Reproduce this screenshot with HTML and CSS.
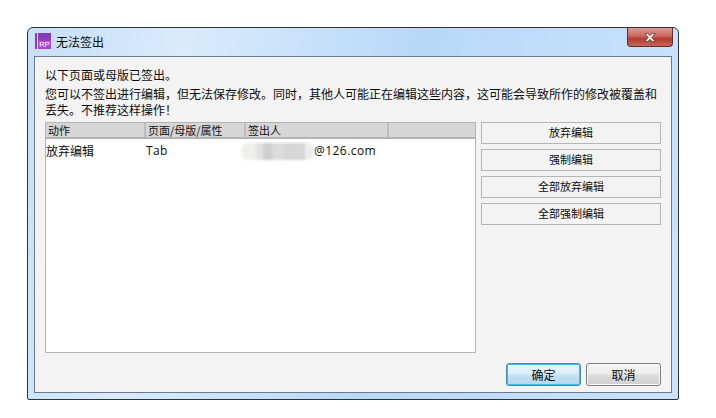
FILE: index.html
```html
<!DOCTYPE html>
<html lang="zh-CN">
<head>
<meta charset="utf-8">
<title>无法签出</title>
<link rel="stylesheet" href="styles.css">
</head>
<body>
<div class="window">
  <header class="titlebar">
    <div class="app-icon">
      <svg width="16" height="16" viewBox="0 0 16 16">
        <defs>
          <linearGradient id="rp" x1="0" y1="0" x2="0" y2="1">
            <stop offset="0" stop-color="#7f3bb4"/>
            <stop offset="0.45" stop-color="#8d3fc0"/>
            <stop offset="0.5" stop-color="#b04cd6"/>
            <stop offset="1" stop-color="#a843cc"/>
          </linearGradient>
        </defs>
        <rect width="2" height="16" fill="#8a3bbd"/>
        <rect x="2" width="1" height="16" fill="#e8d8f4"/>
        <rect x="3" width="13" height="16" fill="url(#rp)"/>
        <text x="4.2" y="14.4" class="app-icon-text">RP</text>
      </svg>
    </div>
    <span class="title">无法签出</span>
    <button class="close" aria-label="关闭">
      <svg width="12" height="9" viewBox="0 0 12 9">
        <path d="M0.8 0.5H3.6L6 2.6L8.4 0.5H11.2L7.8 4.5L11.2 8.5H8.4L6 6.4L3.6 8.5H0.8L4.2 4.5Z" fill="#f4f0f0" stroke="#6b3d3a" stroke-width="0.8"/>
      </svg>
    </button>
  </header>
  <main class="client">
    <p class="line first">以下页面或母版已签出。</p>
    <p class="line para">您可以不签出进行编辑，但无法保存修改。同时，其他人可能正在编辑这些内容，这可能会导致所作的修改被覆盖和丢失。不推荐这样操作！</p>
    <div class="middle">
      <div class="table">
        <div class="thead">
          <div class="th c1">动作</div>
          <div class="th c2">页面/母版/属性</div>
          <div class="th c3">签出人</div>
          <div class="th c4"></div>
        </div>
        <div class="row">
          <div class="td c1">放弃编辑</div>
          <div class="td c2 latin">Tab</div>
          <div class="td c3 latin email"><span class="blur"></span>@126.com</div>
        </div>
      </div>
      <div class="actions">
        <button class="btn">放弃编辑</button>
        <button class="btn">强制编辑</button>
        <button class="btn">全部放弃编辑</button>
        <button class="btn">全部强制编辑</button>
      </div>
    </div>
    <div class="footer">
      <button class="dlg primary">确定</button>
      <button class="dlg">取消</button>
    </div>
  </main>
</div>
</body>
</html>
```

FILE: styles.css
```css
* { box-sizing: border-box; }
html, body { margin: 0; padding: 0; background: #fff; }
body {
  width: 716px;
  height: 418px;
  padding: 27px 0 0 27px;
  font-family: "Noto Sans CJK SC", "Liberation Sans", sans-serif;
  font-size: 12px;
  color: #0c0c0c;
  overflow: hidden;
}
.window {
  width: 652px;
  height: 373px;
  border: 1px solid #2f3438;
  border-radius: 6px 6px 2px 2px;
  background: linear-gradient(100deg, #c6def6 0%, #d9ebfc 22%, #b9d8f8 55%, #cbe3fb 100%);
  padding: 0 6px 6px;
  display: flex;
  flex-direction: column;
}
.titlebar {
  height: 28px;
  flex: none;
  display: flex;
  align-items: center;
  padding-bottom: 2px;
}
.app-icon { width: 16px; height: 16px; margin: 0 5px 0 1px; display: flex; }
.app-icon-text { font-family: "Liberation Sans", sans-serif; font-size: 7.5px; fill: #fff; }
.title { font-size: 12px; color: #0c0c0c; margin-left: 0; }
.close {
  margin: 0 -1px 0 auto;
  align-self: flex-start;
  width: 46px;
  height: 19px;
  padding: 0;
  border: 1px solid #5e2f2f;
  border-top: 0;
  border-radius: 0 0 4px 4px;
  background: linear-gradient(#dd9a90 0%, #c9685e 45%, #b33a30 60%, #c8655a 100%);
  display: flex;
  align-items: center;
  justify-content: center;
}
.client {
  flex: 1;
  min-height: 0;
  background: #f3f3f3;
  border: 1px solid #6a7a8a;
  padding: 10px 10px 6px;
  display: flex;
  flex-direction: column;
}
.line { margin: 0; line-height: 16px; }
.first { height: 16px; }
.para { margin-top: 3px; height: 32px; }
.middle { display: flex; gap: 5px; height: 232px; margin-top: 4px; }
.table {
  width: 431px;
  height: 231px;
  background: #fff;
  border: 1px solid #b4b4b4;
  display: flex;
  flex-direction: column;
}
.thead {
  display: flex;
  height: 16px;
  background: #d6d6d6;
  border-bottom: 2px solid #b4b4b4;
  flex: none;
  font-size: 11px;
}
.th {
  padding-left: 2px;
  line-height: 15px;
  border-right: 2px solid #bdbdbd;
  color: #111;
}
.c1 { width: 100px; }
.c2 { width: 100px; }
.c3 { width: 143px; }
.c4 { flex: 1; border-right: 0; }
.row { display: flex; height: 23px; line-height: 22px; padding-top: 1px; }
.latin { font-family: "Open Sans", "Liberation Sans", sans-serif; letter-spacing: 0.3px; }
.email { display: flex; letter-spacing: 0.45px; }
.blur {
  width: 73px;
  height: 17px;
  margin: 3px 0 0 -5px;
  border-radius: 8px;
  filter: blur(0.8px);
  background: linear-gradient(90deg, #efefec 0 20%, #e2e2e2 20% 30%, #cfcfd2 30% 42%, #dcdcdc 42% 60%, #d6d6d6 60% 88%, #ececec 88%);
}
.actions { flex: 1; display: flex; flex-direction: column; gap: 5px; }
.btn {
  width: 180px;
  height: 22px;
  padding: 0 0 2px;
  font: inherit;
  font-size: 11px;
  color: #0c0c0c;
  background: #f3f3f3;
  border: 1px solid #b4b4b4;
}
.footer {
  display: flex;
  justify-content: flex-end;
  gap: 5px;
  margin-top: 9px;
}
.dlg {
  width: 75px;
  height: 23px;
  padding: 0;
  font: inherit;
  color: #0c0c0c;
  border: 1px solid #7d7d7d;
  border-radius: 3px;
  background: linear-gradient(#f5f5f5 0%, #ebebeb 45%, #dcdcdc 55%, #cfcfcf 100%);
  box-shadow: inset 0 0 0 1px #f8f8f8;
}
.primary {
  border-color: #3f8fb5;
  background: linear-gradient(#eaf5fc 0%, #dcedf8 45%, #c4e0f1 55%, #b4d6ea 100%);
  box-shadow: inset 0 0 0 1px #38c0ea;
}
```
